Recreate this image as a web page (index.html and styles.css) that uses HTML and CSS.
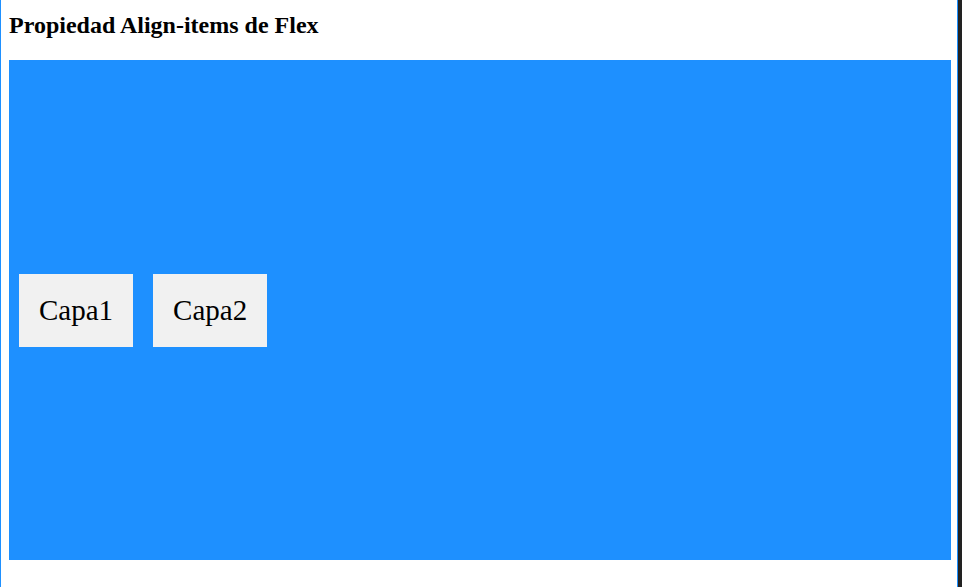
FILE: index.html
```html
<!DOCTYPE html>
<html lang="es">
<head>
<meta charset="utf-8">
<title>Align-items</title>
<link rel="stylesheet" href="styles.css">
</head>
<body>
<div class="page">
  <h2 class="title">Propiedad Align-items de Flex</h2>
  <div class="flex">
    <div class="capa">Capa1</div>
    <div class="capa">Capa2</div>
  </div>
</div>
</body>
</html>
```
FILE: styles.css
```css
html, body {
  margin: 0;
  padding: 0;
  background: #ffffff;
}
body {
  font-family: "Liberation Serif", "Times New Roman", serif;
  color: #000;
}
.page {
  height: 587px;
  box-sizing: border-box;
  border-left: 1px solid #1e90ff;
  border-right: 4px solid #222222;
  box-shadow: inset -1px 0 0 #1e90ff;
  padding: 0 7px 0 8px;
  overflow: hidden;
}
.title {
  font-size: 24px;
  font-weight: bold;
  margin: 0;
  padding-top: 11px;
  height: 60px;
  box-sizing: border-box;
  line-height: 28px;
}
.flex {
  display: flex;
  align-items: center;
  height: 500px;
  background: #1e90ff;
}
.capa {
  background: #f1f1f1;
  margin: 10px;
  padding: 20px;
  font-size: 29px;
  line-height: 33px;
}
```
